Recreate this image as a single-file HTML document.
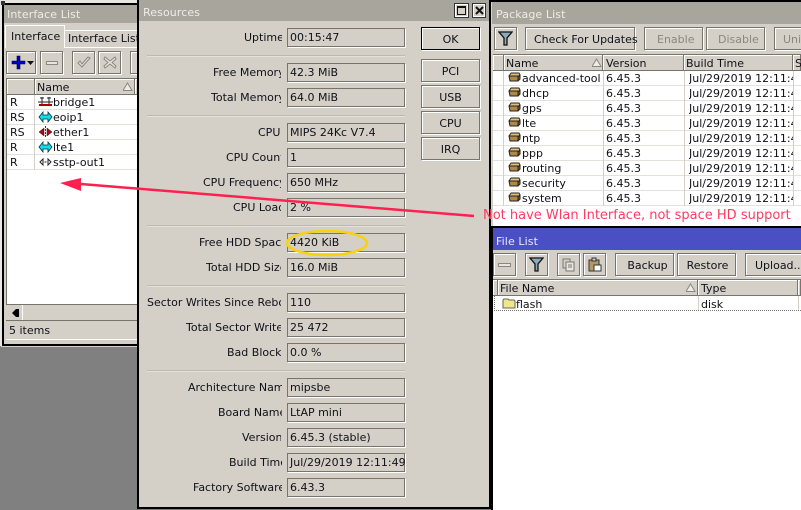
<!DOCTYPE html>
<html><head><meta charset="utf-8">
<style>
html,body{margin:0;padding:0;background:#808080}
#r{position:relative;width:801px;height:510px;overflow:hidden;font:11px "DejaVu Sans",sans-serif;color:#101018;background:#808080}
#r div{position:absolute;box-sizing:border-box;white-space:nowrap}
.win{background:#d4d0c8;border:2px solid #000;box-shadow:0 0 0 1px #d4d0c8}
.tb{background:#a8a59d;color:#eeece6;font-size:11px;letter-spacing:.1px;line-height:20px;padding-left:3px}
.btn{background:#d4d0c8;border:1px solid #77746e;box-shadow:inset 1px 1px 0 #fff,1px 1px 0 #fff;text-align:center;line-height:23px}
.ok{border:1px solid #000}
.dis{color:#8a8780}
.l{overflow:hidden;height:16px;line-height:16px}
.f{left:287px;width:118px;height:19px;border:1px solid #77746e;box-shadow:1px 1px 0 #fff;padding-left:2px;line-height:17px;background:#d4d0c8}
.s{left:147px;width:258px;height:1px;background:#bdb9b1;box-shadow:0 1px 0 #e4e1da}
.t{height:15px;line-height:15px}
.h{background:#d4d0c8;border-right:1px solid #77746e;border-bottom:1px solid #77746e;border-top:1px solid #77746e;height:17px;line-height:17px;padding-left:2px;box-shadow:inset 1px 1px 0 #fff}
.v{width:1px;background:#d4d0c8}
</style></head><body>
<div id="r">

<!-- Interface List -->
<div class="win" style="left:2px;top:3px;width:140px;height:343px"></div>
<div style="left:0;top:0;width:2px;height:346px;background:#e8e6e0"></div>
<div style="left:0;top:0;width:140px;height:3px;background:#e8e6e0"></div>
<div style="left:1px;top:1px;width:4px;height:4px;background:#333"></div>
<div class="tb" style="left:4px;top:5px;width:136px;height:18px;line-height:19px">Interface List</div>
<div style="left:5px;top:25px;width:60px;height:23px;background:#d4d0c8;border:1px solid #fff;border-bottom:none;line-height:21px;padding-left:5px">Interface</div>
<div style="left:65px;top:30px;width:75px;height:17px;line-height:16px;padding-left:3px;overflow:hidden;border-top:1px solid #fff">Interface List</div>
<div style="left:65px;top:47px;width:75px;height:1px;background:#fff"></div>
<div class="btn" style="left:6px;top:51px;width:30px;height:23px"></div>
<svg style="position:absolute;left:11px;top:54px" width="24" height="17"><path d="M6 2h3v5h5v3H9v5H6v-5H1V7h5z" fill="#00c" stroke="#003" stroke-width=".6"/><path d="M16 7h7l-3.500 4z" fill="#111"/></svg>
<div class="btn" style="left:40px;top:51px;width:23px;height:23px"></div>
<div style="left:46px;top:61px;width:12px;height:4px;background:#e8e5de;border:1px solid #8a8780"></div>
<div class="btn" style="left:72px;top:51px;width:23px;height:23px"></div>
<svg style="position:absolute;left:77px;top:56px" width="14" height="13"><path d="M1 7l4 4 8-9-2-1-6 7-2-3z" fill="#e8e5de" stroke="#8a8780"/></svg>
<div class="btn" style="left:98px;top:51px;width:23px;height:23px"></div>
<svg style="position:absolute;left:103px;top:56px" width="14" height="13"><path d="M2 1l5 4 5-4 1 2-4 3.500 4 3.500-1 2-5-4-5 4-1-2 4-3.500-4-3.500z" fill="#e8e5de" stroke="#8a8780"/></svg>
<div class="btn" style="left:130px;top:51px;width:12px;height:23px"></div>

<div style="left:6px;top:78px;width:134px;height:226px;background:#fff;border-top:1px solid #77746e;border-left:1px solid #77746e"></div>
<div class="h" style="left:7px;top:78px;width:28px"></div>
<div class="h" style="left:35px;top:78px;width:100px">Name</div>
<svg style="position:absolute;left:123px;top:82px" width="10" height="10"><path d="M4.500 1L9 8.500H0z" fill="#eeece6" stroke="#8a8780"/></svg>
<div class="h" style="left:135px;top:78px;width:5px"></div>

<div class="t" style="left:10px;top:95px">R</div><div class="t" style="left:53px;top:95px">bridge1</div>
<div class="t" style="left:10px;top:110px">RS</div><div class="t" style="left:53px;top:110px">eoip1</div>
<div class="t" style="left:10px;top:125px">RS</div><div class="t" style="left:53px;top:125px">ether1</div>
<div class="t" style="left:10px;top:140px">R</div><div class="t" style="left:53px;top:140px">lte1</div>
<div class="t" style="left:10px;top:155px">R</div><div class="t" style="left:53px;top:155px">sstp-out1</div>
<div style="left:7px;top:109px;width:133px;height:1px;background:#e4e1da"></div>
<div style="left:7px;top:124px;width:133px;height:1px;background:#e4e1da"></div>
<div style="left:7px;top:139px;width:133px;height:1px;background:#e4e1da"></div>
<div style="left:7px;top:154px;width:133px;height:1px;background:#e4e1da"></div>
<div style="left:7px;top:169px;width:133px;height:1px;background:#e4e1da"></div>
<div class="v" style="left:34px;top:95px;height:75px"></div>
<svg style="position:absolute;left:38px;top:95px" width="15" height="75">
<path d="M0 7h15M4 2v9M11 2v9M2 3h4M9 3h4" stroke="#222" fill="none"/><path d="M1 10h13" stroke="#a00" stroke-width="2"/>
<path d="M1 22l4-5v3h5v-3l4 5-4 5v-3H5v3z" fill="#1de" stroke="#033" stroke-width=".8"/>
<path d="M1 37l5-4v8zM14 37l-5-4v8z" fill="#a01020" stroke="#400" stroke-width=".5"/><path d="M7.500 31v12" stroke="#333" stroke-dasharray="2 1"/>
<path d="M1 52l4-5v3h5v-3l4 5-4 5v-3H5v3z" fill="#1de" stroke="#033" stroke-width=".8"/>
<path d="M2 67l3-3v6zM13 67l-3-3v6z" fill="#fff" stroke="#222"/><path d="M6.500 67h2" stroke="#222"/>
</svg>

<div style="left:6px;top:304px;width:134px;height:16px;background:#d4d0c8;border-top:1px solid #77746e"></div>
<div style="left:7px;top:305px;width:16px;height:15px;background:#d4d0c8;border-right:1px solid #fff"></div>
<svg style="position:absolute;left:11px;top:308px" width="10" height="10"><path d="M1 5l4-4h3v8H5z" fill="#000"/></svg>
<div style="left:6px;top:320px;width:134px;height:1px;background:#77746e"></div>
<div class="t" style="left:9px;top:323px">5 items</div>
<div style="left:6px;top:339px;width:134px;height:1px;background:#fff"></div>

<!-- Resources -->
<div class="win" style="left:137px;top:-2px;width:354px;height:511px;border-color:#000;box-shadow:none"></div>
<div class="tb" style="left:139px;top:0;width:350px;height:21px;line-height:25px;padding-left:4px">Resources</div>
<div style="left:454px;top:3px;width:15px;height:15px;background:#d4d0c8;border:1px solid #333;box-shadow:inset 0 0 0 1px #fff"></div>
<div style="left:457px;top:6px;width:9px;height:9px;border:1px solid #111;border-top-width:2px"></div>
<div style="left:472px;top:3px;width:14px;height:15px;background:#d4d0c8;border:1px solid #333;box-shadow:inset 0 0 0 1px #fff"></div>
<svg style="position:absolute;left:475px;top:6px" width="9" height="9"><path d="M1 1l7 7M8 1L1 8" stroke="#111" stroke-width="2"/></svg>

<div class="l" style="left:244px;top:30px;width:38px">Uptime</div><div class="f" style="top:28px">00:15:47</div>
<div class="s" style="top:55px"></div>
<div class="l" style="left:213px;top:65px;width:68px">Free Memory</div><div class="f" style="top:63px">42.3 MiB</div>
<div class="l" style="left:211px;top:90px;width:70px">Total Memory</div><div class="f" style="top:88px">64.0 MiB</div>
<div class="s" style="top:115px"></div>
<div class="l" style="left:258px;top:125px;width:24px">CPU</div><div class="f" style="top:123px">MIPS 24Kc V7.4</div>
<div class="l" style="left:226px;top:150px;width:55px">CPU Count</div><div class="f" style="top:148px">1</div>
<div class="l" style="left:203px;top:175px;width:78px">CPU Frequency</div><div class="f" style="top:173px">650 MHz</div>
<div class="l" style="left:233px;top:200px;width:48px">CPU Load</div><div class="f" style="top:198px">2 %</div>
<div class="s" style="top:225px"></div>
<div class="l" style="left:199px;top:235px;width:82px">Free HDD Space</div><div class="f" style="top:233px">4420 KiB</div>
<div class="l" style="left:206px;top:260px;width:75px">Total HDD Size</div><div class="f" style="top:258px">16.0 MiB</div>
<div class="s" style="top:285px"></div>
<div class="l" style="left:147px;top:295px;width:134px">Sector Writes Since Reboot</div><div class="f" style="top:293px">110</div>
<div class="l" style="left:186px;top:320px;width:95px">Total Sector Writes</div><div class="f" style="top:318px">25 472</div>
<div class="l" style="left:227px;top:345px;width:54px">Bad Blocks</div><div class="f" style="top:343px">0.0 %</div>
<div class="s" style="top:370px"></div>
<div class="l" style="left:188px;top:380px;width:94px">Architecture Name</div><div class="f" style="top:378px">mipsbe</div>
<div class="l" style="left:218px;top:405px;width:64px">Board Name</div><div class="f" style="top:403px">LtAP mini</div>
<div class="l" style="left:242px;top:430px;width:39px">Version</div><div class="f" style="top:428px">6.45.3 (stable)</div>
<div class="l" style="left:229px;top:455px;width:53px">Build Time</div><div class="f" style="top:453px">Jul/29/2019 12:11:49</div>
<div class="l" style="left:193px;top:480px;width:89px">Factory Software</div><div class="f" style="top:478px">6.43.3</div>

<div class="btn ok" style="left:421px;top:27px;width:59px;height:23px">OK</div>
<div class="btn" style="left:421px;top:59px;width:59px;height:23px">PCI</div>
<div class="btn" style="left:421px;top:85px;width:59px;height:23px">USB</div>
<div class="btn" style="left:421px;top:111px;width:59px;height:23px">CPU</div>
<div class="btn" style="left:421px;top:137px;width:59px;height:23px">IRQ</div>

<!-- Package List -->
<div style="left:489px;top:0;width:312px;height:228px;background:#000"></div>
<div style="left:491px;top:2px;width:310px;height:224px;background:#d4d0c8"></div>
<div class="tb" style="left:492px;top:2px;width:309px;height:22px;line-height:25px;padding-left:4px">Package List</div>
<div class="btn" style="left:494px;top:27px;width:23px;height:23px"></div>
<svg style="position:absolute;left:498px;top:31px" width="15" height="15"><path d="M1 1h13L9 7v7H6V7z" fill="#8ab" stroke="#111" stroke-width="1.300"/></svg>
<div class="btn" style="left:525px;top:27px;width:110px;height:23px;text-align:left;padding-left:8px;overflow:visible">Check For Updates</div>
<div class="btn dis" style="left:644px;top:27px;width:59px;height:23px;text-align:left;padding-left:12px">Enable</div>
<div class="btn dis" style="left:706px;top:27px;width:59px;height:23px;text-align:left;padding-left:11px">Disable</div>
<div class="btn dis" style="left:774px;top:27px;width:40px;height:23px;text-align:left;padding-left:8px">Uninstall</div>

<div style="left:493px;top:54px;width:308px;height:172px;background:#fff"></div>
<div class="h" style="left:493px;top:54px;width:11px"></div>
<div class="h" style="left:504px;top:54px;width:99px">Name</div>
<svg style="position:absolute;left:592px;top:58px" width="10" height="10"><path d="M4.500 1L9 8.500H0z" fill="#eeece6" stroke="#8a8780"/></svg>
<div class="h" style="left:603px;top:54px;width:81px;padding-left:3px">Version</div>
<div class="h" style="left:684px;top:54px;width:109px">Build Time</div>
<div class="h" style="left:793px;top:54px;width:8px">S</div>
<div style="left:493px;top:85px;width:308px;height:1px;background:#e4e1da"></div>
<div style="left:493px;top:100px;width:308px;height:1px;background:#e4e1da"></div>
<div style="left:493px;top:115px;width:308px;height:1px;background:#e4e1da"></div>
<div style="left:493px;top:130px;width:308px;height:1px;background:#e4e1da"></div>
<div style="left:493px;top:145px;width:308px;height:1px;background:#e4e1da"></div>
<div style="left:493px;top:160px;width:308px;height:1px;background:#e4e1da"></div>
<div style="left:493px;top:175px;width:308px;height:1px;background:#e4e1da"></div>
<div style="left:493px;top:190px;width:308px;height:1px;background:#e4e1da"></div>
<div style="left:493px;top:205px;width:308px;height:1px;background:#e4e1da"></div>
<div class="v" style="left:503px;top:71px;height:135px"></div>
<div class="v" style="left:603px;top:71px;height:135px"></div>
<div class="v" style="left:684px;top:71px;height:135px"></div>
<div class="v" style="left:793px;top:71px;height:135px"></div>

<svg style="position:absolute;left:508px;top:71px" width="13" height="135">
<g stroke="#222" stroke-width="1" stroke-linejoin="round">
<g><path d="M1 5l2-3h8l1 2-2 2z" fill="#e0c080"/><path d="M1 5h9v5H2z" fill="#b08848"/><path d="M10 6l2-2v4l-2 2z" fill="#806030"/></g>
<g transform="translate(0,15)"><path d="M1 5l2-3h8l1 2-2 2z" fill="#e0c080"/><path d="M1 5h9v5H2z" fill="#b08848"/><path d="M10 6l2-2v4l-2 2z" fill="#806030"/></g>
<g transform="translate(0,30)"><path d="M1 5l2-3h8l1 2-2 2z" fill="#e0c080"/><path d="M1 5h9v5H2z" fill="#b08848"/><path d="M10 6l2-2v4l-2 2z" fill="#806030"/></g>
<g transform="translate(0,45)"><path d="M1 5l2-3h8l1 2-2 2z" fill="#e0c080"/><path d="M1 5h9v5H2z" fill="#b08848"/><path d="M10 6l2-2v4l-2 2z" fill="#806030"/></g>
<g transform="translate(0,60)"><path d="M1 5l2-3h8l1 2-2 2z" fill="#e0c080"/><path d="M1 5h9v5H2z" fill="#b08848"/><path d="M10 6l2-2v4l-2 2z" fill="#806030"/></g>
<g transform="translate(0,75)"><path d="M1 5l2-3h8l1 2-2 2z" fill="#e0c080"/><path d="M1 5h9v5H2z" fill="#b08848"/><path d="M10 6l2-2v4l-2 2z" fill="#806030"/></g>
<g transform="translate(0,90)"><path d="M1 5l2-3h8l1 2-2 2z" fill="#e0c080"/><path d="M1 5h9v5H2z" fill="#b08848"/><path d="M10 6l2-2v4l-2 2z" fill="#806030"/></g>
<g transform="translate(0,105)"><path d="M1 5l2-3h8l1 2-2 2z" fill="#e0c080"/><path d="M1 5h9v5H2z" fill="#b08848"/><path d="M10 6l2-2v4l-2 2z" fill="#806030"/></g>
<g transform="translate(0,120)"><path d="M1 5l2-3h8l1 2-2 2z" fill="#e0c080"/><path d="M1 5h9v5H2z" fill="#b08848"/><path d="M10 6l2-2v4l-2 2z" fill="#806030"/></g>
</g></svg>

<div class="t" style="left:522px;top:71px;width:79px;overflow:hidden">advanced-tools</div>
<div class="t" style="left:522px;top:86px">dhcp</div>
<div class="t" style="left:522px;top:101px">gps</div>
<div class="t" style="left:522px;top:116px">lte</div>
<div class="t" style="left:522px;top:131px">ntp</div>
<div class="t" style="left:522px;top:146px">ppp</div>
<div class="t" style="left:522px;top:161px">routing</div>
<div class="t" style="left:522px;top:176px">security</div>
<div class="t" style="left:522px;top:191px">system</div>
<div class="t" style="left:606px;top:71px">6.45.3</div><div class="t" style="left:689px;top:71px;width:104px;overflow:hidden">Jul/29/2019 12:11:49</div>
<div class="t" style="left:606px;top:86px">6.45.3</div><div class="t" style="left:689px;top:86px;width:104px;overflow:hidden">Jul/29/2019 12:11:49</div>
<div class="t" style="left:606px;top:101px">6.45.3</div><div class="t" style="left:689px;top:101px;width:104px;overflow:hidden">Jul/29/2019 12:11:49</div>
<div class="t" style="left:606px;top:116px">6.45.3</div><div class="t" style="left:689px;top:116px;width:104px;overflow:hidden">Jul/29/2019 12:11:49</div>
<div class="t" style="left:606px;top:131px">6.45.3</div><div class="t" style="left:689px;top:131px;width:104px;overflow:hidden">Jul/29/2019 12:11:49</div>
<div class="t" style="left:606px;top:146px">6.45.3</div><div class="t" style="left:689px;top:146px;width:104px;overflow:hidden">Jul/29/2019 12:11:49</div>
<div class="t" style="left:606px;top:161px">6.45.3</div><div class="t" style="left:689px;top:161px;width:104px;overflow:hidden">Jul/29/2019 12:11:49</div>
<div class="t" style="left:606px;top:176px">6.45.3</div><div class="t" style="left:689px;top:176px;width:104px;overflow:hidden">Jul/29/2019 12:11:49</div>
<div class="t" style="left:606px;top:191px">6.45.3</div><div class="t" style="left:689px;top:191px;width:104px;overflow:hidden">Jul/29/2019 12:11:49</div>

<!-- File List -->
<div style="left:491px;top:226px;width:310px;height:284px;background:#000"></div>
<div style="left:493px;top:228px;width:308px;height:282px;background:#d4d0c8"></div>
<div class="tb" style="left:493px;top:228px;width:308px;height:22px;background:#4a4fc4;line-height:27px;color:#e8e8f8">File List</div>
<div class="btn" style="left:493px;top:253px;width:23px;height:23px"></div>
<div style="left:498px;top:263px;width:13px;height:4px;background:#e8e5de;border:1px solid #8a8780"></div>
<div class="btn" style="left:525px;top:253px;width:23px;height:23px"></div>
<svg style="position:absolute;left:529px;top:257px" width="15" height="15"><path d="M1 1h13L9 7v7H6V7z" fill="#8ab" stroke="#111" stroke-width="1.300"/></svg>
<div class="btn" style="left:557px;top:253px;width:23px;height:23px"></div>
<svg style="position:absolute;left:562px;top:258px" width="14" height="14"><path d="M1 1h7v9H1z" fill="#d4d0c8" stroke="#777"/><path d="M4 4h8v9H4z" fill="#e8e5de" stroke="#777"/><path d="M6 7h4M6 9h4" stroke="#777"/></svg>
<div class="btn" style="left:583px;top:253px;width:23px;height:23px"></div>
<svg style="position:absolute;left:588px;top:257px" width="14" height="15"><path d="M1 3h10v11H1z" fill="#b89860" stroke="#333"/><path d="M4 1h4v3H4z" fill="#ccc" stroke="#333"/><path d="M6 8h7v6H6z" fill="#fff" stroke="#333"/></svg>
<div class="btn" style="left:615px;top:253px;width:59px;height:23px;padding-left:6px">Backup</div>
<div class="btn" style="left:677px;top:253px;width:59px;height:23px;padding-left:2px">Restore</div>
<div class="btn" style="left:745px;top:253px;width:70px;height:23px;text-align:left;padding-left:9px">Upload...</div>

<div style="left:493px;top:279px;width:308px;height:231px;background:#fff"></div>
<div class="h" style="left:493px;top:279px;width:5px"></div>
<div class="h" style="left:498px;top:279px;width:200px">File Name</div>
<svg style="position:absolute;left:686px;top:283px" width="10" height="10"><path d="M4.500 1L9 8.500H0z" fill="#eeece6" stroke="#8a8780"/></svg>
<div class="h" style="left:698px;top:279px;width:100px;padding-left:3px">Type</div>
<div class="h" style="left:798px;top:279px;width:3px"></div>
<svg style="position:absolute;left:502px;top:297px" width="14" height="13"><path d="M1 3l1-1h4l1 1h5l1 1v7H1z" fill="#f0e68c" stroke="#665"/></svg>
<div class="t" style="left:516px;top:297px">flash</div>
<div class="t" style="left:701px;top:297px">disk</div>
<div class="v" style="left:698px;top:296px;height:14px"></div>
<div class="v" style="left:798px;top:296px;height:14px"></div>
<div style="left:494px;top:310px;width:307px;border-top:1px dotted #777;height:1px"></div>
<div style="left:494px;top:296px;height:15px;border-left:1px dotted #777;width:1px"></div>

<!-- annotation -->
<svg style="position:absolute;left:0;top:0" width="801" height="510">
<ellipse cx="327" cy="243" rx="40" ry="12" fill="none" stroke="#f6d210" stroke-width="2.500"/>
<path d="M81 184L474 216" stroke="#ff2050" stroke-width="2.500" fill="none"/>
<path d="M60 183L81 178V191z" fill="#ff2050"/>
</svg>
<div style="left:483px;top:207px;height:18px;line-height:18px;font-size:13px;color:#ff3a62;letter-spacing:0">Not have Wlan Interface, not space HD support</div>
</div>
</body></html>
